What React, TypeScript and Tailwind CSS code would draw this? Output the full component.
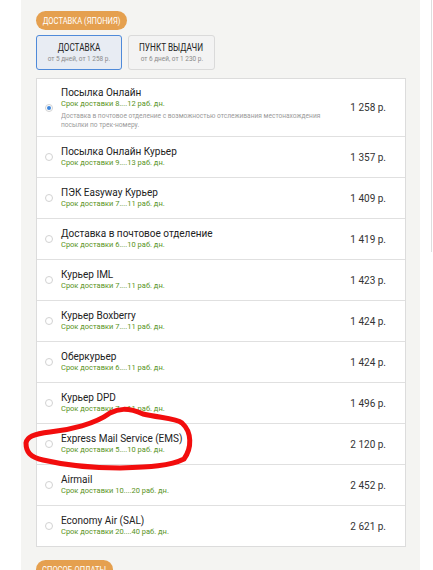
import React from "react";

type Row = { title: string; term: string; price: string; desc?: string[]; checked?: boolean };

const rows: Row[] = [
  {
    title: "Посылка Онлайн",
    term: "Срок доставки 8....12 раб. дн.",
    price: "1 258 р.",
    desc: ["Доставка в почтовое отделение с возможностью отслеживания местонахождения", "посылки по трек-номеру."],
    checked: true,
  },
  { title: "Посылка Онлайн Курьер", term: "Срок доставки 9....13 раб. дн.", price: "1 357 р." },
  { title: "ПЭК Easyway Курьер", term: "Срок доставки 7....11 раб. дн.", price: "1 409 р." },
  { title: "Доставка в почтовое отделение", term: "Срок доставки 6....10 раб. дн.", price: "1 419 р." },
  { title: "Курьер IML", term: "Срок доставки 7....11 раб. дн.", price: "1 423 р." },
  { title: "Курьер Boxberry", term: "Срок доставки 7....11 раб. дн.", price: "1 424 р." },
  { title: "Оберкурьер", term: "Срок доставки 6....11 раб. дн.", price: "1 424 р." },
  { title: "Курьер DPD", term: "Срок доставки 7....11 раб. дн.", price: "1 496 р." },
  { title: "Express Mail Service (EMS)", term: "Срок доставки 5....10 раб. дн.", price: "2 120 р." },
  { title: "Airmail", term: "Срок доставки 10....20 раб. дн.", price: "2 452 р." },
  { title: "Economy Air (SAL)", term: "Срок доставки 20....40 раб. дн.", price: "2 621 р." },
];

const main = { fontFamily: '"Roboto", "Liberation Sans", sans-serif' };

function Radio({ checked }: { checked?: boolean }) {
  return (
    <div className="w-[8px] h-[8px] rounded-full border border-[#d2d2d2] bg-white flex items-center justify-center shrink-0">
      {checked && <div className="w-[4px] h-[4px] rounded-full bg-[#3d86dc]" />}
    </div>
  );
}

function Badge({ text, width, className = "" }: { text: string; width: string; className?: string }) {
  return (
    <div className={`flex ${className}`}>
      <div
        className={`${width} h-[19px] rounded-full bg-[#e5a04f] text-white flex items-center justify-center overflow-hidden`}
      >
        <span className="text-[9.5px] leading-none uppercase whitespace-nowrap scale-x-[0.8]">{text}</span>
      </div>
    </div>
  );
}

function Tab({ title, sub, active }: { title: string; sub: string; active?: boolean }) {
  return (
    <div
      className={`h-[35px] rounded-[3px] border flex flex-col items-center justify-center ${
        active ? "w-[86px] border-[#4f8ad9] bg-[#e8ecf3]" : "w-[87px] border-[#dadada] bg-[#f3f3f3]"
      }`}
    >
      <div className="text-[10px] leading-[12px] text-[#222] uppercase whitespace-nowrap scale-x-[0.82]">{title}</div>
      <div className="text-[7px] leading-[10px] text-[#8a8a8a] whitespace-nowrap scale-x-[0.92]">{sub}</div>
    </div>
  );
}

export default function App() {
  return (
    <div className="relative w-[433px] h-[570px] overflow-hidden bg-white" style={main}>
      <div className="absolute left-[431px] top-0 w-px h-[252px] bg-[#dedede]" />
      <div className="ml-[21px] w-[399px] h-[570px] bg-[#f4f4f2] pl-[15px] pr-[14px] pt-[11px]">
        <Badge text="Доставка (Япония)" width="w-[91px]" />
        <div className="flex gap-[6px] mt-[5px]">
          <Tab title="Доставка" sub="от 5 дней, от 1 258 р." active />
          <Tab title="Пункт выдачи" sub="от 6 дней, от 1 230 р." />
        </div>
        <div className="mt-[8px] w-[370px] bg-white border border-[#dcdcdc]">
          {rows.map((r, i) => (
            <div
              key={i}
              className={`flex items-center pl-[8px] pr-[19px] ${i === 0 ? "h-[57px]" : "h-[41px] border-t border-[#e0e0e0]"}`}
            >
              <Radio checked={r.checked} />
              <div className="ml-[8px] flex-1 min-w-0">
                <div className="text-[10px] leading-[11px] text-[#222] whitespace-nowrap">{r.title}</div>
                <div className="text-[7.5px] leading-[11px] text-[#589322] whitespace-nowrap">{r.term}</div>
                {r.desc && (
                  <div className="text-[7.5px] leading-[9px] text-[#9a9a9a] mt-[2px] whitespace-nowrap origin-left scale-x-[0.88]">
                    {r.desc[0]}
                    <br />
                    {r.desc[1]}
                  </div>
                )}
              </div>
              <div className="text-[10px] text-[#333] whitespace-nowrap">{r.price}</div>
            </div>
          ))}
        </div>
        <Badge text="Способ оплаты" width="w-[77px]" className="mt-[13px]" />
      </div>
      <svg className="absolute left-0 top-0 pointer-events-none" width="433" height="570">
        <path
          d="M110 413 C 118 409, 127 407, 143 414 C 160 418, 176 418, 182 423 C 192 432, 192 448, 184 459 C 170 466, 150 467, 120 468 C 90 468, 60 464, 43 460 C 30 457, 26 452, 26 443 C 27 437, 33 434, 50 432 C 70 430, 95 424, 110 413"
          fill="none"
          stroke="#f20d0d"
          strokeWidth="5"
          strokeLinecap="round"
          strokeLinejoin="round"
        />
      </svg>
    </div>
  );
}
